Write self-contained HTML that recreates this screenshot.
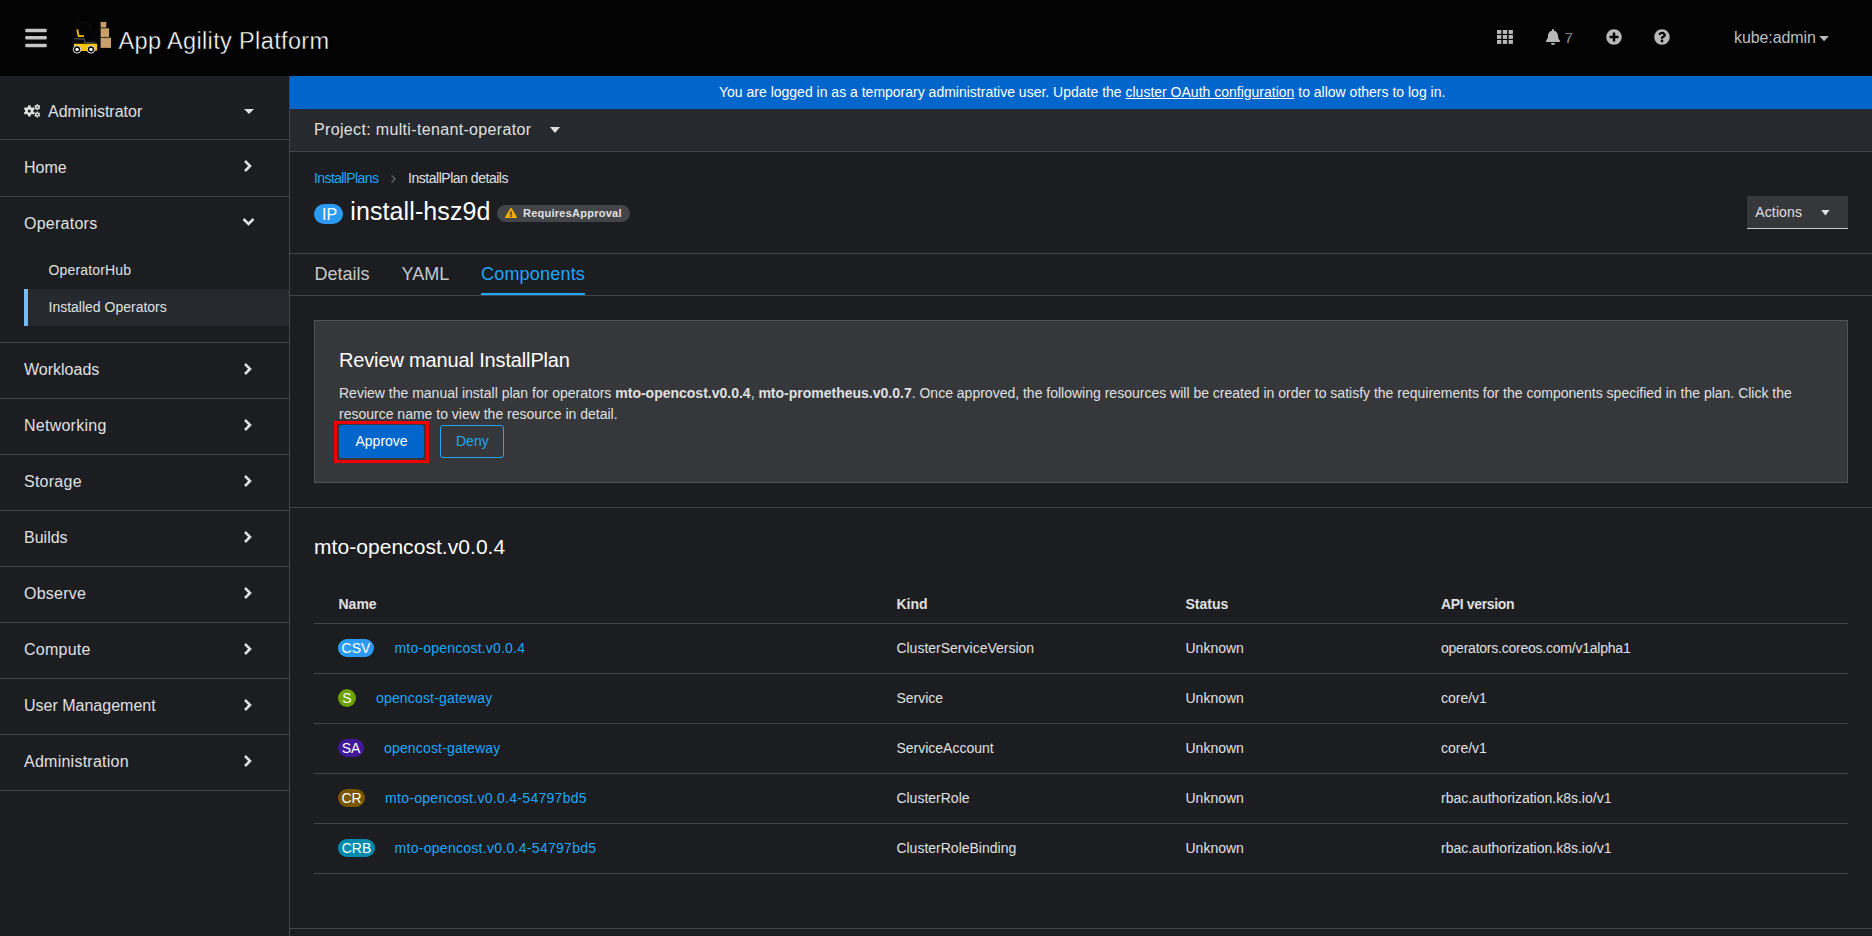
<!DOCTYPE html>
<html><head><meta charset="utf-8">
<style>
*{box-sizing:border-box}
html,body{margin:0;padding:0}
body{width:1872px;height:936px;overflow:hidden;position:relative;background:#1b1d21;font-family:"Liberation Sans",sans-serif;color:#e0e0e0}
.a{position:absolute}
.t{position:absolute;white-space:pre;line-height:1}
.hl{position:absolute;height:1px;background:#444548}
.lnk{color:#1fa7f8}
.badge{position:absolute;height:18px;border-radius:9px;color:#fff;font-size:14px;line-height:18px;padding:0;text-align:center;white-space:pre}
</style></head><body>

<!-- MASTHEAD -->
<div class="a" style="left:0;top:0;width:1872px;height:76px;background:#030303"></div>
<svg class="a" style="left:24px;top:27px" width="24" height="22" viewBox="0 0 24 22" fill="#c4c4c4">
  <rect x="1.2" y="1.7" width="21.6" height="3.5" rx="1.3"/>
  <rect x="1.2" y="9.1" width="21.6" height="3.5" rx="1.3"/>
  <rect x="1.2" y="16.7" width="21.6" height="3.5" rx="1.3"/>
</svg>

<!-- logo -->
<svg class="a" style="left:70px;top:20px" width="44" height="36" viewBox="0 0 44 36">
  <path d="M6 22 L6 2.7 L18 2.7 L25.8 23" fill="none" stroke="#0e0e0e" stroke-width="1"/>
  <path d="M7.3 9.3 L8.6 16.2 L13.9 16.2" fill="none" stroke="#f2c200" stroke-width="1.8" stroke-linejoin="round"/>
  <path d="M4.3 18.6 L14.3 19 L14.6 22.4 L25.5 23.2" fill="none" stroke="#4a4a4a" stroke-width="1.3"/>
  <path d="M3.9 23.7 L27.1 23.7 L27.1 30.6 L22 30.9 L10 30.9 L4.2 30.3 Z" fill="#f5c400"/>
  <circle cx="7.05" cy="29.4" r="3.75" fill="#000" stroke="#e8e8e8" stroke-width="1"/>
  <circle cx="7.05" cy="29.4" r="1.7" fill="#fff"/>
  <circle cx="20.95" cy="29.4" r="3.75" fill="#000" stroke="#e8e8e8" stroke-width="1"/>
  <circle cx="20.95" cy="29.4" r="1.7" fill="#fff"/>
  <rect x="30.6" y="1.9" width="5.7" height="5.6" fill="#c9a06a"/>
  <rect x="30.6" y="8.3" width="8.5" height="8.7" fill="#c9a06a"/>
  <rect x="30.6" y="17.7" width="10.4" height="10.2" fill="#c9a06a"/>
  <path d="M33.4 2 V3.5 M34.8 8.4 V9.6 M34.8 15.8 V17 M35.8 17.8 V19 M35.8 26.6 V27.8" stroke="#9c7a4c" stroke-width="0.6"/>
</svg>
<div class="t" style="left:118.5px;top:30.2px;font-size:23.5px;color:#fff;letter-spacing:0.36px;-webkit-text-stroke:0.4px #030303">App Agility Platform</div>

<!-- masthead right icons -->
<svg class="a" style="left:1497px;top:30px" width="16" height="14" viewBox="0 0 16 14" fill="#b8b8b8">
  <rect x="0" y="0" width="4.3" height="3.9"/><rect x="5.8" y="0" width="4.3" height="3.9"/><rect x="11.6" y="0" width="4.3" height="3.9"/>
  <rect x="0" y="5" width="4.3" height="3.9"/><rect x="5.8" y="5" width="4.3" height="3.9"/><rect x="11.6" y="5" width="4.3" height="3.9"/>
  <rect x="0" y="10" width="4.3" height="3.9"/><rect x="5.8" y="10" width="4.3" height="3.9"/><rect x="11.6" y="10" width="4.3" height="3.9"/>
</svg>
<svg class="a" style="left:1546px;top:29px" width="14" height="16" viewBox="0 0 448 512" fill="#b8b8b8">
  <path d="M224 512c35.3 0 64-28.7 64-64H160c0 35.3 28.7 64 64 64zm215.4-149.7c-19.3-20.8-55.5-52-55.5-154.3 0-77.7-54.5-139.9-127.9-155.2V32c0-17.7-14.3-32-32-32s-32 14.3-32 32v20.8C118.6 68.1 64.1 130.3 64.1 208c0 102.3-36.2 133.5-55.5 154.3-6 6.5-8.7 14.2-8.6 21.7.1 16.4 13 32 32.1 32h383.8c19.1 0 32-15.6 32.1-32 .1-7.5-2.6-15.3-8.6-21.7z"/>
</svg>
<div class="t" style="left:1564.6px;top:30.4px;font-size:15px;color:#b8b8b8;-webkit-text-stroke:0.25px #030303">7</div>
<svg class="a" style="left:1606px;top:29px" width="16" height="16" viewBox="0 0 512 512" fill="#b8b8b8">
  <path d="M256 8C119 8 8 119 8 256s111 248 248 248 248-111 248-248S393 8 256 8zm144 276c0 6.6-5.4 12-12 12h-92v92c0 6.6-5.4 12-12 12h-56c-6.6 0-12-5.4-12-12v-92h-92c-6.6 0-12-5.4-12-12v-56c0-6.6 5.4-12 12-12h92v-92c0-6.6 5.4-12 12-12h56c6.6 0 12 5.4 12 12v92h92c6.6 0 12 5.4 12 12v56z"/>
</svg>
<svg class="a" style="left:1654px;top:29px" width="16" height="16" viewBox="0 0 512 512" fill="#b8b8b8">
  <path d="M504 256c0 136.997-111.043 248-248 248S8 392.997 8 256C8 119.083 119.043 8 256 8s248 111.083 248 248zM262.655 90c-54.497 0-89.255 22.957-116.549 63.758-3.536 5.286-2.353 12.415 2.715 16.258l34.699 26.31c5.205 3.947 12.621 3.008 16.665-2.122 17.864-22.658 30.113-35.797 57.303-35.797 20.429 0 45.698 13.148 45.698 32.958 0 14.976-12.363 22.667-32.534 33.976C247.128 238.528 216 254.941 216 296v4c0 6.627 5.373 12 12 12h56c6.627 0 12-5.373 12-12v-1.333c0-28.462 83.186-29.647 83.186-106.667 0-58.002-60.165-102-116.531-102zM256 338c-25.365 0-46 20.635-46 46 0 25.364 20.635 46 46 46s46-20.636 46-46c0-25.365-20.635-46-46-46z"/>
</svg>
<div class="t" style="left:1734px;top:30px;font-size:16px;color:#bdbdbd;letter-spacing:-0.1px">kube:admin</div>
<svg class="a" style="left:1819px;top:36px" width="10" height="6" viewBox="0 0 10 6"><path d="M0.3 0 L9.8 0 L5.05 5.3 Z" fill="#bdbdbd"/></svg>

<!-- SIDEBAR -->
<div class="a" style="left:289px;top:76px;width:1px;height:860px;background:#444548"></div>
<svg class="a" style="left:23px;top:104px" width="18" height="15" viewBox="0 0 18 15" fill="#e0e0e0">
  <g transform="translate(6.3,6.9)">
    <circle r="4.2"/>
    <g>
      <rect x="-1.3" y="-5.6" width="2.6" height="11.2"/>
      <rect x="-1.3" y="-5.6" width="2.6" height="11.2" transform="rotate(60)"/>
      <rect x="-1.3" y="-5.6" width="2.6" height="11.2" transform="rotate(120)"/>
    </g>
    <circle r="1.5" fill="#1b1d21"/>
  </g>
  <g transform="translate(14.3,3.2)">
    <circle r="2.1"/>
    <rect x="-0.8" y="-2.9" width="1.6" height="5.8"/>
    <rect x="-0.8" y="-2.9" width="1.6" height="5.8" transform="rotate(60)"/>
    <rect x="-0.8" y="-2.9" width="1.6" height="5.8" transform="rotate(120)"/>
    <circle r="0.8" fill="#1b1d21"/>
  </g>
  <g transform="translate(14.3,10.6)">
    <circle r="2.1"/>
    <rect x="-0.8" y="-2.9" width="1.6" height="5.8"/>
    <rect x="-0.8" y="-2.9" width="1.6" height="5.8" transform="rotate(60)"/>
    <rect x="-0.8" y="-2.9" width="1.6" height="5.8" transform="rotate(120)"/>
    <circle r="0.8" fill="#1b1d21"/>
  </g>
</svg>
<div class="t" style="left:48px;top:104.2px;font-size:16px;color:#e0e0e0">Administrator</div>
<svg class="a" style="left:244px;top:109px" width="10" height="5" viewBox="0 0 10 5"><path d="M0 0 L10 0 L5 5 Z" fill="#e0e0e0"/></svg>
<div class="hl" style="left:0;top:139px;width:289px"></div>

<div class="t" style="left:24px;top:159.6px;font-size:16px">Home</div>
<svg class="a" style="left:243px;top:159px" width="10" height="14" viewBox="0 0 10 14"><path d="M2 2 L7 7 L2 12" fill="none" stroke="#e0e0e0" stroke-width="2.6"/></svg>
<div class="hl" style="left:0;top:196px;width:289px"></div>

<div class="t" style="left:24px;top:215.8px;font-size:16px;letter-spacing:0.25px">Operators</div>
<svg class="a" style="left:242px;top:216px" width="13" height="11" viewBox="0 0 13 11"><path d="M1.5 3 L6.5 8 L11.5 3" fill="none" stroke="#e0e0e0" stroke-width="2.6"/></svg>
<div class="t" style="left:48.5px;top:262.7px;font-size:14px;letter-spacing:0.15px">OperatorHub</div>
<div class="a" style="left:24px;top:289px;width:265px;height:37px;background:#26292d"></div>
<div class="a" style="left:24px;top:289px;width:4px;height:37px;background:#73bcf7"></div>
<div class="t" style="left:48.5px;top:300.4px;font-size:14px">Installed Operators</div>
<div class="hl" style="left:0;top:342px;width:289px"></div>

<div class="t" style="left:24px;top:361.8px;font-size:16px">Workloads</div>
<svg class="a" style="left:243px;top:362px" width="10" height="14" viewBox="0 0 10 14"><path d="M2 2 L7 7 L2 12" fill="none" stroke="#e0e0e0" stroke-width="2.6"/></svg>
<div class="hl" style="left:0;top:398px;width:289px"></div>
<div class="t" style="left:24px;top:417.8px;font-size:16px;letter-spacing:0.25px">Networking</div>
<svg class="a" style="left:243px;top:418px" width="10" height="14" viewBox="0 0 10 14"><path d="M2 2 L7 7 L2 12" fill="none" stroke="#e0e0e0" stroke-width="2.6"/></svg>
<div class="hl" style="left:0;top:454px;width:289px"></div>
<div class="t" style="left:24px;top:473.8px;font-size:16px;letter-spacing:0.25px">Storage</div>
<svg class="a" style="left:243px;top:474px" width="10" height="14" viewBox="0 0 10 14"><path d="M2 2 L7 7 L2 12" fill="none" stroke="#e0e0e0" stroke-width="2.6"/></svg>
<div class="hl" style="left:0;top:510px;width:289px"></div>
<div class="t" style="left:24px;top:529.8px;font-size:16px">Builds</div>
<svg class="a" style="left:243px;top:530px" width="10" height="14" viewBox="0 0 10 14"><path d="M2 2 L7 7 L2 12" fill="none" stroke="#e0e0e0" stroke-width="2.6"/></svg>
<div class="hl" style="left:0;top:566px;width:289px"></div>
<div class="t" style="left:24px;top:585.8px;font-size:16px;letter-spacing:0.25px">Observe</div>
<svg class="a" style="left:243px;top:586px" width="10" height="14" viewBox="0 0 10 14"><path d="M2 2 L7 7 L2 12" fill="none" stroke="#e0e0e0" stroke-width="2.6"/></svg>
<div class="hl" style="left:0;top:622px;width:289px"></div>
<div class="t" style="left:24px;top:641.8px;font-size:16px;letter-spacing:0.25px">Compute</div>
<svg class="a" style="left:243px;top:642px" width="10" height="14" viewBox="0 0 10 14"><path d="M2 2 L7 7 L2 12" fill="none" stroke="#e0e0e0" stroke-width="2.6"/></svg>
<div class="hl" style="left:0;top:678px;width:289px"></div>
<div class="t" style="left:24px;top:697.8px;font-size:16px">User Management</div>
<svg class="a" style="left:243px;top:698px" width="10" height="14" viewBox="0 0 10 14"><path d="M2 2 L7 7 L2 12" fill="none" stroke="#e0e0e0" stroke-width="2.6"/></svg>
<div class="hl" style="left:0;top:734px;width:289px"></div>
<div class="t" style="left:24px;top:753.8px;font-size:16px;letter-spacing:0.25px">Administration</div>
<svg class="a" style="left:243px;top:754px" width="10" height="14" viewBox="0 0 10 14"><path d="M2 2 L7 7 L2 12" fill="none" stroke="#e0e0e0" stroke-width="2.6"/></svg>
<div class="hl" style="left:0;top:790px;width:289px"></div>

<!-- MAIN -->
<div class="a" style="left:290px;top:76px;width:1582px;height:33px;background:#0066cc"></div>
<div class="t" style="left:719px;top:85.2px;font-size:14px;color:#fff">You are logged in as a temporary administrative user. Update the <span style="text-decoration:underline">cluster OAuth configuration</span> to allow others to log in.</div>

<div class="a" style="left:290px;top:109px;width:1582px;height:42px;background:#26292d"></div>
<div class="hl" style="left:290px;top:151px;width:1582px"></div>
<div class="t" style="left:314px;top:121.8px;font-size:16px;color:#e0e0e0;letter-spacing:0.34px">Project: multi-tenant-operator</div>
<svg class="a" style="left:550px;top:127px" width="10" height="6" viewBox="0 0 10 6"><path d="M0 0 L10 0 L5 6 Z" fill="#e0e0e0"/></svg>

<div class="t lnk" style="left:314px;top:171px;font-size:14px;letter-spacing:-0.6px">InstallPlans</div>
<svg class="a" style="left:390px;top:173.5px" width="7" height="10" viewBox="0 0 7 10"><path d="M1.6 1.3 L5 5 L1.6 8.7" fill="none" stroke="#55575b" stroke-width="1.7"/></svg>
<div class="t" style="left:408px;top:171px;font-size:14px;letter-spacing:-0.47px">InstallPlan details</div>

<div class="badge" style="left:314px;top:204px;width:29px;height:20px;border-radius:10px;background:#2b9af3;font-size:16px;line-height:21px;text-align:left;padding:0 0 0 8px">IP</div>
<div class="t" style="left:350.3px;top:199.1px;font-size:25px;color:#fff;letter-spacing:0.1px">install-hsz9d</div>
<div class="a" style="left:497px;top:205px;width:133px;height:17px;border-radius:9px;background:#444548"></div>
<svg class="a" style="left:505px;top:207.8px" width="12" height="10.5" viewBox="0 0 576 512" preserveAspectRatio="none"><path fill="#f0ab00" d="M569.517 440.013C587.975 472.007 564.806 512 527.94 512H48.054c-36.937 0-59.999-40.055-41.577-71.987L246.423 23.985c18.467-32.009 64.72-31.951 83.154 0l239.94 416.028zM288 354c-25.405 0-46 20.595-46 46s20.595 46 46 46 46-20.595 46-46-20.595-46-46-46zm-43.673-165.346l7.418 136c.347 6.364 5.609 11.346 11.982 11.346h48.546c6.373 0 11.635-4.982 11.982-11.346l7.418-136c.375-6.874-5.098-12.654-11.982-12.654h-63.383c-6.884 0-12.356 5.78-11.981 12.654z"/></svg>
<div class="t" style="left:523px;top:207.5px;font-size:11px;font-weight:bold;color:#e0e0e0;letter-spacing:0.25px">RequiresApproval</div>

<div class="a" style="left:1747px;top:196px;width:101px;height:33px;background:#36373b;border-bottom:1px solid #c8c8c8"></div>
<div class="t" style="left:1755.3px;top:205px;font-size:14px;color:#e0e0e0;letter-spacing:0.12px">Actions</div>
<svg class="a" style="left:1821px;top:209.7px" width="9" height="6" viewBox="0 0 9 6"><path d="M0.2 0 L8.6 0 L4.4 5.6 Z" fill="#e0e0e0"/></svg>

<div class="hl" style="left:290px;top:253px;width:1582px"></div>
<div class="t" style="left:314.5px;top:264.8px;font-size:18px;color:#c8c8c8">Details</div>
<div class="t" style="left:401.5px;top:264.8px;font-size:18px;color:#c8c8c8">YAML</div>
<div class="t" style="left:481px;top:264.8px;font-size:18px;color:#1fa7f8;letter-spacing:0.2px">Components</div>
<div class="hl" style="left:290px;top:295px;width:1582px"></div>
<div class="a" style="left:481px;top:293px;width:104px;height:2px;background:#1fa7f8"></div>

<!-- card -->
<div class="a" style="left:314px;top:320px;width:1534px;height:163px;background:#36373b;border:1px solid #4f5255"></div>
<div class="t" style="left:339px;top:349.8px;font-size:20px;color:#fff;letter-spacing:-0.15px">Review manual InstallPlan</div>
<div class="t" style="left:339px;top:385.7px;font-size:14px;color:#e0e0e0">Review the manual install plan for operators <b>mto-opencost.v0.0.4</b>, <b>mto-prometheus.v0.0.7</b>. Once approved, the following resources will be created in order to satisfy the requirements for the components specified in the plan. Click the</div>
<div class="t" style="left:339px;top:407px;font-size:14px;color:#e0e0e0">resource name to view the resource in detail.</div>
<div class="a" style="left:334px;top:421px;width:95px;height:42px;border:3px solid #ee0000"></div>
<div class="a" style="left:339px;top:425px;width:85px;height:33px;background:#0066cc;border-radius:3px"></div>
<div class="t" style="left:355.5px;top:434.4px;font-size:14px;color:#fff">Approve</div>
<div class="a" style="left:440px;top:425px;width:64px;height:33px;border:1px solid #1fa7f8;border-radius:3px"></div>
<div class="t" style="left:456px;top:434.4px;font-size:14px;color:#1fa7f8">Deny</div>

<div class="hl" style="left:290px;top:507px;width:1582px"></div>
<div class="t" style="left:314px;top:536.2px;font-size:21px;color:#fff;letter-spacing:0.05px">mto-opencost.v0.0.4</div>

<div class="t" style="left:338.5px;top:597.4px;font-size:14px;font-weight:bold">Name</div>
<div class="t" style="left:896.4px;top:597.4px;font-size:14px;font-weight:bold">Kind</div>
<div class="t" style="left:1185.5px;top:597.4px;font-size:14px;font-weight:bold">Status</div>
<div class="t" style="left:1441px;top:597.4px;font-size:14px;font-weight:bold;letter-spacing:-0.34px">API version</div>
<div class="hl" style="left:314px;top:623px;width:1534px"></div>

<div class="badge" style="left:338px;top:639px;width:36px;background:#2b9af3">CSV</div>
<div class="t lnk" style="left:394.5px;top:641.2px;font-size:14px;letter-spacing:0.2px">mto-opencost.v0.0.4</div>
<div class="t" style="left:896.4px;top:641.2px;font-size:14px">ClusterServiceVersion</div>
<div class="t" style="left:1185.5px;top:641.2px;font-size:14px">Unknown</div>
<div class="t" style="left:1441px;top:641.2px;font-size:14px;letter-spacing:-0.23px">operators.coreos.com/v1alpha1</div>
<div class="hl" style="left:314px;top:673px;width:1534px"></div>

<div class="badge" style="left:338px;top:689px;width:18px;background:#6ca100">S</div>
<div class="t lnk" style="left:376px;top:691.2px;font-size:14px;letter-spacing:0.17px">opencost-gateway</div>
<div class="t" style="left:896.4px;top:691.2px;font-size:14px">Service</div>
<div class="t" style="left:1185.5px;top:691.2px;font-size:14px">Unknown</div>
<div class="t" style="left:1441px;top:691.2px;font-size:14px">core/v1</div>
<div class="hl" style="left:314px;top:723px;width:1534px"></div>

<div class="badge" style="left:338px;top:739px;width:26px;background:#40199a">SA</div>
<div class="t lnk" style="left:384px;top:741.2px;font-size:14px;letter-spacing:0.17px">opencost-gateway</div>
<div class="t" style="left:896.4px;top:741.2px;font-size:14px">ServiceAccount</div>
<div class="t" style="left:1185.5px;top:741.2px;font-size:14px">Unknown</div>
<div class="t" style="left:1441px;top:741.2px;font-size:14px">core/v1</div>
<div class="hl" style="left:314px;top:773px;width:1534px"></div>

<div class="badge" style="left:338px;top:789px;width:27px;background:#795600">CR</div>
<div class="t lnk" style="left:385px;top:791.2px;font-size:14px;letter-spacing:0.29px">mto-opencost.v0.0.4-54797bd5</div>
<div class="t" style="left:896.4px;top:791.2px;font-size:14px">ClusterRole</div>
<div class="t" style="left:1185.5px;top:791.2px;font-size:14px">Unknown</div>
<div class="t" style="left:1441px;top:791.2px;font-size:14px">rbac.authorization.k8s.io/v1</div>
<div class="hl" style="left:314px;top:823px;width:1534px"></div>

<div class="badge" style="left:338px;top:839px;width:37px;background:#008bad">CRB</div>
<div class="t lnk" style="left:394.5px;top:841.2px;font-size:14px;letter-spacing:0.29px">mto-opencost.v0.0.4-54797bd5</div>
<div class="t" style="left:896.4px;top:841.2px;font-size:14px">ClusterRoleBinding</div>
<div class="t" style="left:1185.5px;top:841.2px;font-size:14px">Unknown</div>
<div class="t" style="left:1441px;top:841.2px;font-size:14px">rbac.authorization.k8s.io/v1</div>
<div class="hl" style="left:314px;top:873px;width:1534px"></div>

<div class="hl" style="left:290px;top:928px;width:1582px"></div>

</body></html>
